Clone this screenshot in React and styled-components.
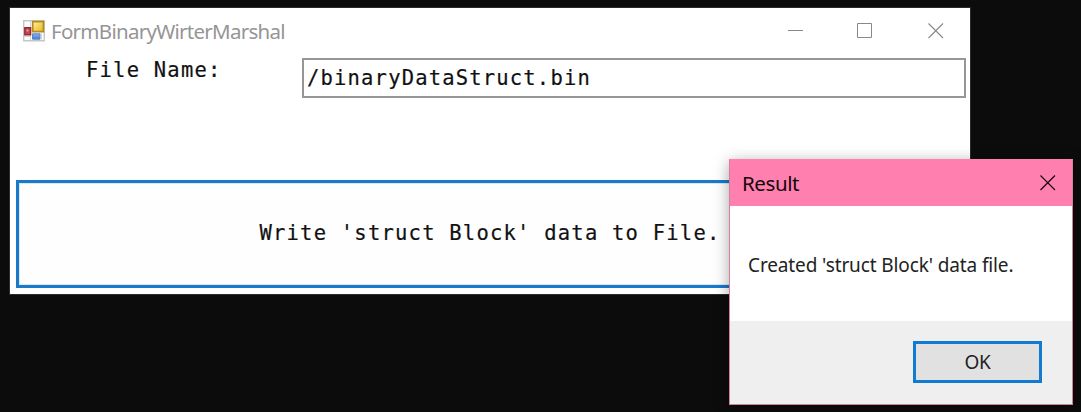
import React from 'react';
import styled, { createGlobalStyle } from 'styled-components';

const GlobalStyle = createGlobalStyle`
  * { box-sizing: border-box; }
  body { margin: 0; background: #0c0c0c; }
`;

const uiFont = '"Noto Sans", "Open Sans", sans-serif';
const monoFont = '"DejaVu Sans Mono", monospace';

const Desktop = styled.main`
  position: relative;
  width: 1081px;
  height: 412px;
  padding: 8px 0 0 10px;
  overflow: hidden;
  background: #0c0c0c;
  font-family: ${uiFont};
`;

const FormWindow = styled.section`
  display: flex;
  flex-direction: column;
  width: 960px;
  height: 286px;
  background: #fff;
  box-shadow: 0 0 0 1px #2b2b2b;
`;

const TitleBar = styled.header`
  display: flex;
  align-items: center;
  height: 46px;
  padding-left: 13px;
`;

const Title = styled.h1`
  flex: 1;
  margin: 0 0 1px 6px;
  font-weight: 400;
  font-size: 20.5px;
  line-height: 26px;
  letter-spacing: -0.72px;
  color: #959595;
`;

const Caption = styled.button`
  display: flex;
  align-items: center;
  justify-content: center;
  width: ${(p) => p.$width}px;
  height: 46px;
  padding: 0 0 0 ${(p) => p.$nudge || 0}px;
  border: 0;
  background: transparent;
  color: ${(p) => p.$color};
`;

const FieldRow = styled.div`
  display: flex;
  align-items: flex-start;
  height: 126px;
  padding: 4px 4px 0 76px;
`;

const FieldLabel = styled.label`
  width: 216px;
  margin-top: -1px;
  font: 20.5px/26px ${monoFont};
  letter-spacing: 1.22px;
  -webkit-text-stroke: 0.2px #111;
  color: #111;
`;

const FieldInput = styled.input`
  flex: 1;
  min-width: 0;
  height: 40px;
  padding: 0 0 0 3px;
  border: 2px solid #969696;
  outline: 0;
  background: #fff;
  font: 20.5px/36px ${monoFont};
  letter-spacing: 1.18px;
  -webkit-text-stroke: 0.2px #111;
  color: #111;
`;

const WriteButton = styled.button`
  height: 108px;
  margin: 0 6px;
  padding: 0 0 3px;
  border: 3px solid #1b79ca;
  background: #fefefe;
  box-shadow: inset 0 0 0 1px #d3eafa;
  font: 20.5px/28px ${monoFont};
  letter-spacing: 1.22px;
  -webkit-text-stroke: 0.2px #111;
  color: #111;
`;

const Dialog = styled.section`
  position: absolute;
  left: 729px;
  top: 159px;
  display: flex;
  flex-direction: column;
  width: 344px;
  height: 246px;
  border: 1px solid #d4809c;
  border-top-color: #ff80ae;
  background: #fff;
  box-shadow: 0 3px 14px rgba(0, 0, 0, 0.35);
`;

const DialogHeader = styled.header`
  display: flex;
  align-items: center;
  justify-content: space-between;
  height: 46px;
  padding-left: 12px;
  background: #ff80ae;
`;

const DialogTitle = styled.h2`
  margin: 0 0 1px;
  font-weight: 400;
  font-size: 20.5px;
  line-height: 26px;
  letter-spacing: -0.4px;
  color: #14060b;
`;

const Message = styled.p`
  height: 115px;
  margin: 0;
  padding: 46px 0 0 18px;
  font-size: 19px;
  line-height: 26px;
  letter-spacing: -0.12px;
  white-space: nowrap;
  color: #222;
`;

const DialogFooter = styled.footer`
  display: flex;
  flex: 1;
  justify-content: flex-end;
  align-items: flex-start;
  padding: 20px 30px 0 0;
  background: #efefef;
`;

const OkButton = styled.button`
  width: 129px;
  height: 42px;
  padding: 0;
  border: 3px solid #117bd2;
  background: #e1e1e1;
  font: 19px/26px ${uiFont};
  letter-spacing: -0.4px;
  color: #222;
`;

const FormIcon = () => (
  <svg width="22" height="22" viewBox="0 0 22 22">
    <defs>
      <linearGradient id="gold" x1="0" y1="0" x2="1" y2="1">
        <stop offset="0" stopColor="#fff0a0" />
        <stop offset="1" stopColor="#e5b722" />
      </linearGradient>
      <linearGradient id="blue" x1="0" y1="0" x2="0" y2="1">
        <stop offset="0" stopColor="#8db4ef" />
        <stop offset="1" stopColor="#4379d0" />
      </linearGradient>
    </defs>
    <path d="M.7.7h20.6v20H.7z" fill="#fff" stroke="#c6c6c6" strokeWidth="1.4" />
    <path d="M7.5 1v19M1 16.5h7M18.5 13v7" stroke="#d5d5d5" />
    <path d="M1.8 7.8h5.8v7H1.8z" fill="#c9444b" stroke="#962d35" strokeWidth="1.4" />
    <path d="M3.5 9.5h2v2h-2z" fill="#ee9c9c" />
    <path d="M9.7 1.6h10.7v10H9.7z" fill="url(#gold)" stroke="#b68d1c" strokeWidth="1.7" />
    <path d="M9.5 13.8h7.5v5.4H9.5z" fill="url(#blue)" stroke="#5584ce" />
  </svg>
);

const CloseGlyph = () => (
  <svg width="16" height="16" viewBox="0 0 16 16">
    <path d="M.5.5l14.5 14.5M15 .5l-14.5 14.5" fill="none" stroke="currentColor" strokeWidth="1.1" />
  </svg>
);

export default function App() {
  return (
    <Desktop>
      <GlobalStyle />
      <FormWindow>
        <TitleBar>
          <FormIcon />
          <Title>FormBinaryWirterMarshal</Title>
          <Caption $width={70} $nudge={2} $color="#888" aria-label="Minimize">
            <svg width="16" height="16"><path d="M0 7.5h15" stroke="currentColor" /></svg>
          </Caption>
          <Caption $width={70} $color="#888" aria-label="Maximize">
            <svg width="16" height="16"><path d="M.5.5h14v14H.5z" fill="none" stroke="currentColor" /></svg>
          </Caption>
          <Caption $width={70} $nudge={2} $color="#888" aria-label="Close"><CloseGlyph /></Caption>
        </TitleBar>
        <FieldRow>
          <FieldLabel htmlFor="file-name">File Name:</FieldLabel>
          <FieldInput id="file-name" defaultValue="/binaryDataStruct.bin" spellCheck={false} />
        </FieldRow>
        <WriteButton>Write 'struct Block' data to File.</WriteButton>
      </FormWindow>
      <Dialog role="dialog">
        <DialogHeader>
          <DialogTitle>Result</DialogTitle>
          <Caption $width={50} $nudge={2} $color="#14060b" aria-label="Close"><CloseGlyph /></Caption>
        </DialogHeader>
        <Message>Created 'struct Block' data file.</Message>
        <DialogFooter><OkButton>OK</OkButton></DialogFooter>
      </Dialog>
    </Desktop>
  );
}
